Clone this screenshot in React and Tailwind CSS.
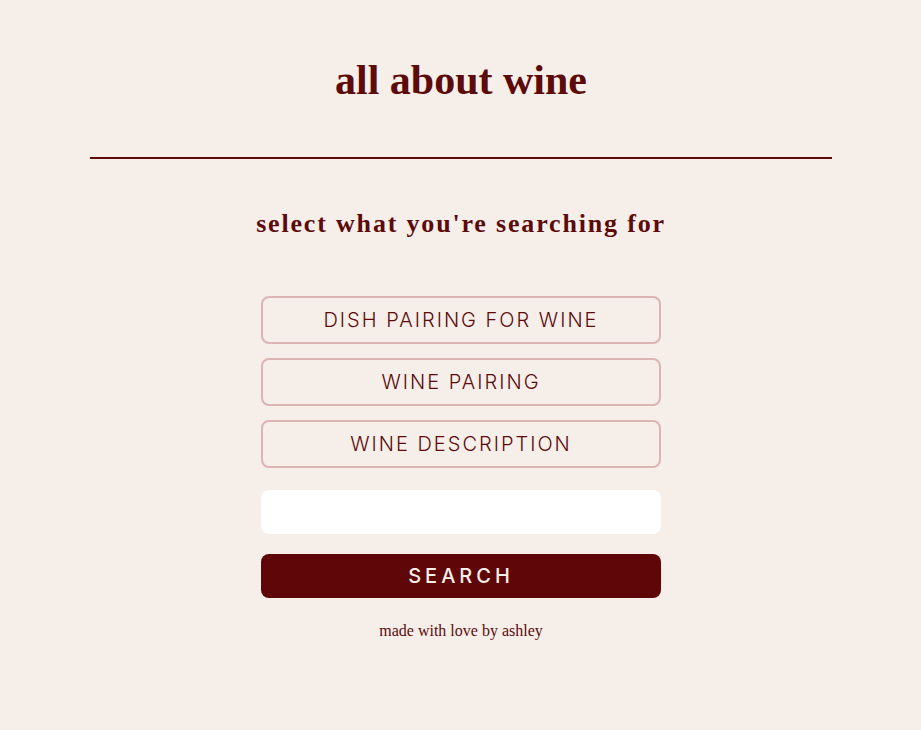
import React, { useState } from 'react';

const options = ['dish pairing for wine', 'wine pairing', 'wine description'];

const App = () => {
  const [query, setQuery] = useState('');
  const [selected, setSelected] = useState(null);

  return (
    <div className="min-h-[730px] bg-[#f5eee9] text-[#5c0a0a]">
      <div className="flex flex-col items-center pl-px">
        {/* header */}
        <h1 className="mt-[54px] text-[42px] font-semibold leading-[52px] [font-family:'Liberation_Serif',serif]">
          all about wine
        </h1>
        <div className="mt-[51px] h-[2px] w-[742px] bg-[#5c0a0a]"></div>

        <h2 className="mt-[49px] text-[26px] font-bold tracking-[0.07em] leading-[32px] [font-family:'Liberation_Serif',serif]">
          select what you're searching for
        </h2>

        {/* choices */}
        <div className="mt-[56px] flex w-[400px] flex-col gap-[14px]">
          {options.map((opt, i) => (
            <button
              key={opt}
              onClick={() => setSelected(i)}
              className={`h-[48px] rounded-lg border-2 border-[#dcb4b4] text-[20px] uppercase tracking-[0.1em] font-light [font-family:Inter,sans-serif] ${selected === i ? 'bg-[#ecdcd8]' : ''}`}
            >
              {opt}
            </button>
          ))}
        </div>

        <input
          value={query}
          onChange={(e) => setQuery(e.target.value)}
          className="mt-[22px] h-[44px] w-[400px] rounded-lg bg-white px-4 outline-none [font-family:Inter,sans-serif]"
        />

        <button className="mt-[20px] h-[44px] w-[400px] rounded-lg bg-[#5e0608] text-[20px] font-medium uppercase tracking-[0.2em] text-[#f5eee9] [font-family:Inter,sans-serif]">
          search
        </button>

        <p className="mt-[21px] text-[16px] leading-[24px] [font-family:'Liberation_Serif',serif]">made with love by ashley</p>
      </div>
    </div>
  );
};

export default App;
